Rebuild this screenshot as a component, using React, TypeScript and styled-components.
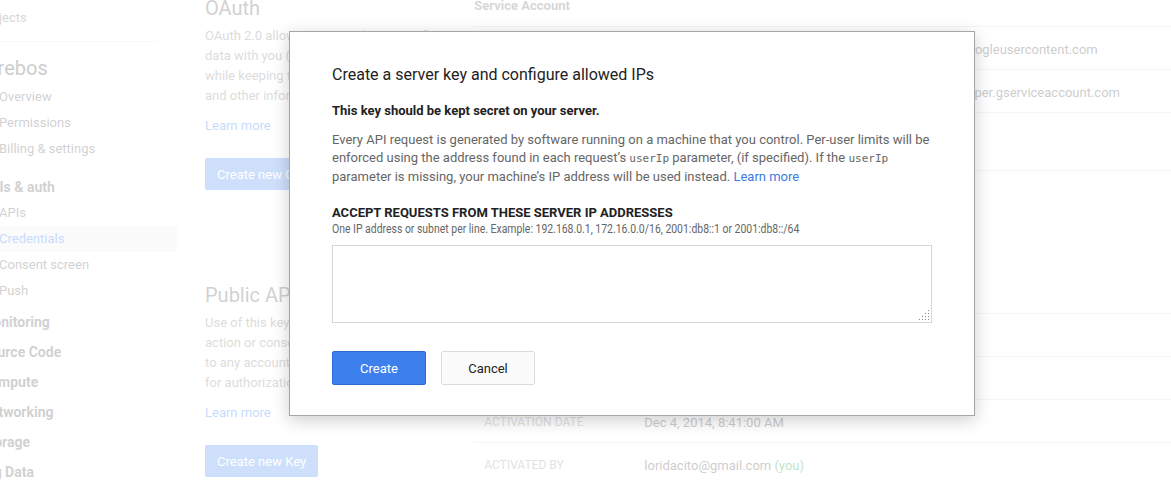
import React from "react";
import styled, { createGlobalStyle } from "styled-components";

const Global = createGlobalStyle`
  html, body { margin: 0; padding: 0; background: #fff; }
  body { font-family: Roboto, "Liberation Sans", Arial, sans-serif; overflow: hidden; }
  * { box-sizing: border-box; }
`;

const Page = styled.div`
  position: relative;
  width: 1171px;
  height: 482px;
  overflow: hidden;
  display: flex;
  align-items: flex-start;
  background: #fff;
`;

/* ---------- Sidebar ---------- */
const Sidebar = styled.nav`
  flex: 0 0 198px;
  margin-left: -21px;
  display: flex;
  flex-direction: column;
`;

const ProjectsLink = styled.div`
  margin-top: 5px;
  height: 26px;
  line-height: 26px;
  font-size: 13px;
  color: #777;
`;

const Separator = styled.hr`
  margin: 10px 20px 0 21px;
  border: 0;
  border-top: 1px solid #e8e8e8;
  height: 0;
`;

const ProjectName = styled.div`
  margin-top: 11px;
  margin-left: -5px;
  height: 31px;
  line-height: 30px;
  font-size: 20px;
  color: #555;
`;

const SectionTitle = styled.div<{ $top: number }>`
  margin-top: ${(p) => p.$top}px;
  padding-left: 2px;
  height: 30px;
  line-height: 30px;
  font-size: 14px;
  font-weight: 700;
  color: #666;
  white-space: nowrap;
`;

const SubList = styled.div<{ $top?: number }>`
  display: flex;
  flex-direction: column;
  margin-top: ${(p) => p.$top ?? -2}px;
`;

const NavItem = styled.div<{ $active?: boolean }>`
  height: 26px;
  line-height: 26px;
  padding-left: 20px;
  font-size: 13px;
  white-space: nowrap;
  color: ${(p) => (p.$active ? "#4285f4" : "#666")};
  background: ${(p) => (p.$active ? "#f0f0f4" : "transparent")};
`;

/* ---------- Middle column ---------- */
const Middle = styled.section`
  flex: 0 0 249px;
  margin-left: 28px;
  margin-top: -4px;
  display: flex;
  flex-direction: column;
  align-items: flex-start;
`;

const BlockTitle = styled.h2<{ $top?: number }>`
  margin: ${(p) => p.$top ?? 0}px 0 0;
  height: 24px;
  line-height: 24px;
  font-size: 20px;
  font-weight: 400;
  color: #666;
  white-space: nowrap;
`;

const BlockText = styled.p`
  margin: 6px 0 0;
  font-size: 13px;
  line-height: 20px;
  color: #888;
  white-space: nowrap;
`;

const LearnMore = styled.a`
  margin-top: 10px;
  display: block;
  height: 20px;
  line-height: 20px;
  font-size: 13px;
  color: #4285f4;
  text-decoration: none;
`;

const PrimaryButton = styled.button`
  margin-top: 22px;
  height: 32px;
  padding: 0 11px;
  border: 1px solid #4d90fe;
  border-radius: 2px;
  background: #5b95f5;
  color: #fff;
  font-family: Roboto, "Liberation Sans", Arial, sans-serif;
  font-size: 13px;
  white-space: nowrap;
`;

/* ---------- Right column ---------- */
const Details = styled.section`
  flex: 1 1 auto;
  margin-left: 20px;
  margin-top: -3px;
  display: flex;
  flex-direction: column;
`;

const DetailsHeader = styled.div`
  height: 30px;
  font-size: 13px;
  line-height: 18px;
  font-weight: 700;
  color: #777;
  border-bottom: 1px solid #dedede;
`;

const Row = styled.div<{ $h: number }>`
  height: ${(p) => p.$h}px;
  display: flex;
  align-items: center;
  border-bottom: 1px solid #dedede;
  white-space: nowrap;
`;

const Label = styled.div`
  flex: 0 0 160px;
  align-self: stretch;
  display: flex;
  align-items: center;
  padding: 2px 0 0 10px;
  font-size: 12px;
  color: #999;
  text-transform: uppercase;
`;

const Value = styled.div`
  padding: 2px 0 0 10px;
  font-size: 13px;
  color: #555;
`;

const You = styled.span`
  color: #2e9e3e;
`;

/* ---------- Overlay + dialog ---------- */
const Veil = styled.div`
  position: absolute;
  inset: 0;
  background: rgba(255, 255, 255, 0.7);
`;

const Dialog = styled.div`
  position: absolute;
  left: 289px;
  top: 31px;
  width: 686px;
  height: 385px;
  background: #fff;
  border: 1px solid #a6a6a6;
  box-shadow: 0 4px 16px rgba(0, 0, 0, 0.2);
  padding: 33px 42px 0 42px;
  display: flex;
  flex-direction: column;
  align-items: flex-start;
`;

const DialogTitle = styled.h1`
  margin: 0;
  height: 20px;
  line-height: 20px;
  font-size: 16px;
  font-weight: 400;
  color: #222;
`;

const Warning = styled.div`
  margin-top: 17px;
  line-height: 18px;
  font-size: 13px;
  font-weight: 700;
  color: #222;
`;

const Explain = styled.p`
  margin: 11px 0 0;
  width: 600px;
  font-size: 13px;
  line-height: 18px;
  color: #666;
`;

const Code = styled.code`
  font-family: "DejaVu Sans Mono", "Liberation Mono", monospace;
  font-size: 11px;
  color: #666;
`;

const InlineLink = styled.a`
  color: #3b7be3;
  text-decoration: none;
`;

const FieldLabel = styled.div`
  margin-top: 19px;
  line-height: 16px;
  font-size: 13px;
  font-weight: 700;
  color: #222;
  white-space: nowrap;
`;

const FieldHint = styled.div`
  line-height: 16px;
  font-size: 12px;
  color: #666;
  white-space: nowrap;
  transform: scaleX(0.87);
  transform-origin: left center;
`;

const InputWrap = styled.div`
  position: relative;
  margin-top: 8px;
  width: 600px;
  height: 78px;
`;

const IpInput = styled.textarea`
  display: block;
  width: 100%;
  height: 100%;
  border: 1px solid #d6d6d6;
  border-radius: 0;
  outline: none;
  resize: none;
  background: #fff;
  font-family: Roboto, "Liberation Sans", Arial, sans-serif;
  font-size: 13px;
`;

const Grip = styled.svg`
  position: absolute;
  right: 2px;
  bottom: 2px;
  width: 11px;
  height: 11px;
  pointer-events: none;
`;

const Actions = styled.div`
  margin-top: 28px;
  display: flex;
  gap: 15px;
`;

const DialogButton = styled.button<{ $primary?: boolean }>`
  width: 94px;
  height: 34px;
  border-radius: 2px;
  font-family: Roboto, "Liberation Sans", Arial, sans-serif;
  font-size: 13px;
  border: 1px solid ${(p) => (p.$primary ? "#2f6bd6" : "#dcdcdc")};
  background: ${(p) => (p.$primary ? "#3d7fed" : "#fbfbfb")};
  color: ${(p) => (p.$primary ? "#fff" : "#222")};
`;

const gripDots: Array<[number, number]> = [
  [9, 0],
  [6, 3], [9, 3],
  [3, 6], [6, 6], [9, 6],
  [0, 9], [3, 9], [6, 9], [9, 9],
];

export default function App() {
  return (
    <>
      <Global />
      <Page>
        <Sidebar>
          <ProjectsLink>Projects</ProjectsLink>
          <Separator />
          <ProjectName>Cerebos</ProjectName>
          <SubList $top={0}>
            <NavItem>Overview</NavItem>
            <NavItem>Permissions</NavItem>
            <NavItem>Billing &amp; settings</NavItem>
          </SubList>
          <SectionTitle $top={10}>APIs &amp; auth</SectionTitle>
          <SubList>
            <NavItem>APIs</NavItem>
            <NavItem $active>Credentials</NavItem>
            <NavItem>Consent screen</NavItem>
            <NavItem>Push</NavItem>
          </SubList>
          <SectionTitle $top={3}>Monitoring</SectionTitle>
          <SectionTitle $top={0}>Source Code</SectionTitle>
          <SectionTitle $top={0}>Compute</SectionTitle>
          <SectionTitle $top={0}>Networking</SectionTitle>
          <SectionTitle $top={0}>Storage</SectionTitle>
          <SectionTitle $top={0}>Big Data</SectionTitle>
        </Sidebar>

        <Middle>
          <BlockTitle>OAuth</BlockTitle>
          <BlockText>
            OAuth 2.0 allows users to share specific
            <br />
            data with you (for example, contact lists)
            <br />
            while keeping their usernames, passwords,
            <br />
            and other information private.
          </BlockText>
          <LearnMore>Learn more</LearnMore>
          <PrimaryButton>Create new Client ID</PrimaryButton>

          <BlockTitle $top={93}>Public API access</BlockTitle>
          <BlockText>
            Use of this key does not require any user
            <br />
            action or consent, does not grant access
            <br />
            to any account information, and is not used
            <br />
            for authorization.
          </BlockText>
          <LearnMore>Learn more</LearnMore>
          <PrimaryButton>Create new Key</PrimaryButton>
        </Middle>

        <Details>
          <DetailsHeader>Service Account</DetailsHeader>
          <Row $h={43}>
            <Label>Client ID</Label>
            <Value>281736493021-k3f9qz7ht2vbn5mx8rl4ws6cj0pd.apps.googleusercontent.com</Value>
          </Row>
          <Row $h={43}>
            <Label>Email address</Label>
            <Value>281736493021-k3f9qz7ht2vbn5mx8rl4ws6cj0pd@developer.gserviceaccount.com</Value>
          </Row>
          <Row $h={58}>
            <Label>Certificate fingerprints</Label>
            <Value>a1b2c3d4e5f60718293a4b5c6d7e8f9012345678</Value>
          </Row>
          <Row $h={143}>
            <Label />
            <Value />
          </Row>
          <Row $h={43}>
            <Label>API key</Label>
            <Value />
          </Row>
          <Row $h={43}>
            <Label>IPs</Label>
            <Value />
          </Row>
          <Row $h={43}>
            <Label>Activation date</Label>
            <Value>Dec 4, 2014, 8:41:00 AM</Value>
          </Row>
          <Row $h={43}>
            <Label>Activated by</Label>
            <Value>
              loridacito@gmail.com <You>(you)</You>
            </Value>
          </Row>
        </Details>

        <Veil />

        <Dialog role="dialog">
          <DialogTitle>Create a server key and configure allowed IPs</DialogTitle>
          <Warning>This key should be kept secret on your server.</Warning>
          <Explain>
            Every API request is generated by software running on a machine that you control. Per-user limits will be
            enforced using the address found in each request&rsquo;s <Code>userIp</Code> parameter, (if specified). If
            the <Code>userIp</Code> parameter is missing, your machine&rsquo;s IP address will be used instead.{" "}
            <InlineLink>Learn more</InlineLink>
          </Explain>
          <FieldLabel>ACCEPT REQUESTS FROM THESE SERVER IP ADDRESSES</FieldLabel>
          <FieldHint>
            One IP address or subnet per line. Example: 192.168.0.1, 172.16.0.0/16, 2001:db8::1 or 2001:db8::/64
          </FieldHint>
          <InputWrap>
            <IpInput />
            <Grip viewBox="0 0 11 11">
              {gripDots.map(([x, y]) => (
                <rect key={`${x}-${y}`} x={x} y={y} width="1" height="1" fill="#8a8a8a" />
              ))}
            </Grip>
          </InputWrap>
          <Actions>
            <DialogButton $primary>Create</DialogButton>
            <DialogButton>Cancel</DialogButton>
          </Actions>
        </Dialog>
      </Page>
    </>
  );
}
